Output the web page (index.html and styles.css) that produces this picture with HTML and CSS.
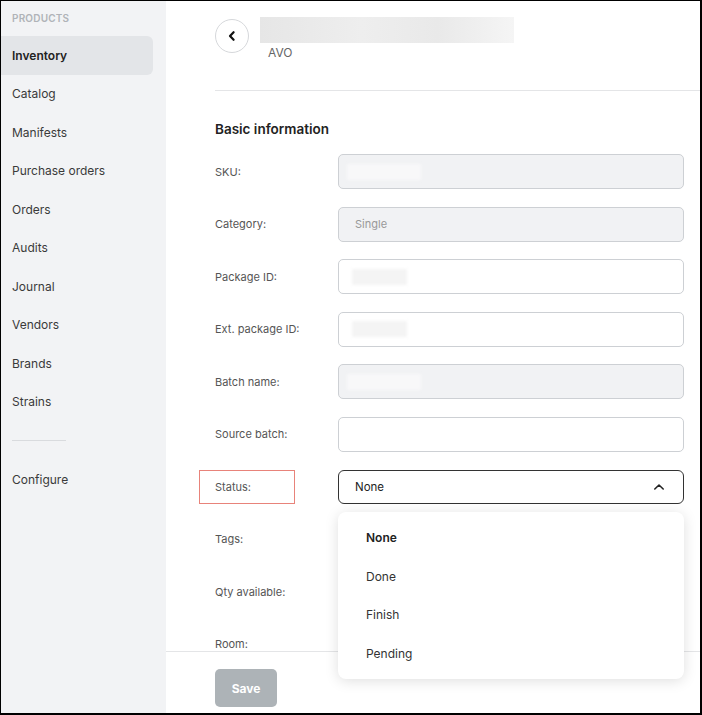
FILE: index.html
```html
<!DOCTYPE html>
<html lang="en">
<head>
  <meta charset="UTF-8" />
  <meta name="viewport" content="width=device-width, initial-scale=1.0" />
  <title>Inventory item</title>
  <link rel="stylesheet" href="styles.css">
</head>
<body>
  <div class="frame">
    <aside class="sidebar">
      <div class="nav-title">PRODUCTS</div>
      <nav>
        <div class="nav-item active">Inventory</div>
        <div class="nav-item">Catalog</div>
        <div class="nav-item">Manifests</div>
        <div class="nav-item">Purchase orders</div>
        <div class="nav-item">Orders</div>
        <div class="nav-item">Audits</div>
        <div class="nav-item">Journal</div>
        <div class="nav-item">Vendors</div>
        <div class="nav-item">Brands</div>
        <div class="nav-item">Strains</div>
      </nav>
      <div class="nav-divider"></div>
      <div class="nav-item">Configure</div>
    </aside>

    <main class="main">
      <div class="content">
        <header class="page-header">
          <button class="back-btn" aria-label="Back">
            <svg width="14" height="14" viewBox="0 0 14 14"><path d="M8.6 3.2 5 7l3.6 3.8" fill="none" stroke="#111" stroke-width="2.2" stroke-linecap="round" stroke-linejoin="round"/></svg>
          </button>
          <div class="title-block">
            <div class="title-blur"></div>
            <div class="subtitle">AVO</div>
          </div>
        </header>

        <section class="form">
          <h2>Basic information</h2>
          <div class="row">
            <label>SKU:</label>
            <div class="field disabled"><span class="blur blur-light"></span></div>
          </div>
          <div class="row">
            <label>Category:</label>
            <div class="field disabled">Single</div>
          </div>
          <div class="row">
            <label>Package ID:</label>
            <div class="field"><span class="blur"></span></div>
          </div>
          <div class="row">
            <label>Ext. package ID:</label>
            <div class="field"><span class="blur"></span></div>
          </div>
          <div class="row">
            <label>Batch name:</label>
            <div class="field disabled"><span class="blur blur-light"></span></div>
          </div>
          <div class="row">
            <label>Source batch:</label>
            <div class="field"></div>
          </div>
          <div class="row">
            <label class="highlight">Status:</label>
            <div class="select-wrap">
              <div class="field select">
                <span>None</span>
                <svg width="14" height="14" viewBox="0 0 14 14"><path d="M2.8 9 7 5l4.2 4" fill="none" stroke="#222" stroke-width="1.6" stroke-linecap="round" stroke-linejoin="round"/></svg>
              </div>
              <div class="dropdown">
                <div class="option selected">None</div>
                <div class="option">Done</div>
                <div class="option">Finish</div>
                <div class="option">Pending</div>
              </div>
            </div>
          </div>
          <div class="row">
            <label>Tags:</label>
            <div class="field"></div>
          </div>
          <div class="row">
            <label>Qty available:</label>
            <div class="field"></div>
          </div>
          <div class="row">
            <label>Room:</label>
            <div class="field"></div>
          </div>
        </section>
      </div>

      <footer class="footer">
        <button class="save-btn">Save</button>
      </footer>
    </main>
  </div>
</body>
</html>
```

FILE: styles.css
```css
* {
  box-sizing: border-box;
}
body {
  margin: 0;
  font-family: Inter, "Noto Sans", Arial, sans-serif;
  color: #333;
  background: #fff;
}
.frame {
  width: 702px;
  height: 715px;
  border: solid #000;
  border-width: 1px 2px 2px 1px;
  display: flex;
  overflow: hidden;
}

/* sidebar */
.sidebar {
  width: 165px;
  flex-shrink: 0;
  background: #f2f3f5;
  padding-top: 10px;
}
.nav-title {
  font-size: 10px;
  line-height: 14px;
  font-weight: 600;
  color: #b0b3b8;
  padding-left: 11px;
  margin-bottom: 11px;
  letter-spacing: 0.2px;
}
.nav-item {
  height: 38.5px;
  display: flex;
  align-items: center;
  padding-left: 11px;
  font-size: 12px;
  color: #3a3a3a;
  margin-right: 13px;
}
.nav-item.active {
  background: #e3e5e8;
  border-radius: 0 6px 6px 0;
  font-weight: 600;
  color: #222;
}
.nav-divider {
  width: 54px;
  height: 1px;
  background: #d9dbde;
  margin: 19px 0 19px 11px;
}

/* main */
.main {
  flex: 1;
  display: flex;
  flex-direction: column;
  min-width: 0;
  min-height: 0;
}
.content {
  flex: 1;
  min-height: 0;
  padding-left: 49px;
}
.page-header {
  height: 90px;
  padding-top: 16px;
  border-bottom: 1px solid #e4e5e7;
  display: flex;
  align-items: flex-start;
  gap: 11px;
}
.back-btn {
  width: 34px;
  height: 34px;
  margin-top: 2px;
  border-radius: 50%;
  border: 1px solid #d6d8db;
  background: #fff;
  display: flex;
  align-items: center;
  justify-content: center;
  padding: 0;
}
.title-blur {
  width: 254px;
  height: 26px;
  background: linear-gradient(to right, #e6e6e6, #eeeeee 40%, #e9e9e9 70%, #f5f5f5);
}
.subtitle {
  margin: 3px 0 0 8px;
  font-size: 12px;
  line-height: 14px;
  color: #666;
}

/* form */
.form {
  padding-right: 16px;
}
.form h2 {
  margin: 28px 0 15px;
  font-size: 13.5px;
  line-height: 20px;
  font-weight: 600;
  color: #222;
}
.row {
  display: flex;
  align-items: center;
  height: 35px;
  margin-bottom: 17.5px;
}
.row label {
  width: 123px;
  flex-shrink: 0;
  font-size: 11px;
  color: #555;
}
.row label.highlight {
  width: 96px;
  height: 34px;
  margin: 0 43px 0 -16px;
  padding-left: 15px;
  display: flex;
  align-items: center;
  border: 1px solid #e8837a;
}
.field {
  flex: 1;
  height: 35px;
  border: 1px solid #cdd0d4;
  border-radius: 5px;
  background: #fff;
  display: flex;
  align-items: center;
  padding: 0 16px;
  font-size: 11px;
  color: #999;
}
.field.disabled {
  background: #f1f2f4;
}
.blur {
  width: 55px;
  height: 16px;
  margin-left: -3px;
  background: #f4f4f4;
  filter: blur(1.5px);
}
.blur-light {
  width: 74px;
  margin-left: -8px;
  background: #f8f8f9;
}

/* status select */
.select-wrap {
  flex: 1;
  position: relative;
}
.field.select {
  height: 34px;
  border-color: #333;
  border-radius: 6px;
  justify-content: space-between;
  color: #222;
  font-size: 11.5px;
  padding-right: 17px;
}
.dropdown {
  position: absolute;
  top: 42px;
  left: 0;
  right: 0;
  background: #fff;
  border-radius: 8px;
  box-shadow: 0 2px 14px rgba(0, 0, 0, 0.13);
  padding: 7px 0 6px;
  z-index: 10;
}
.option {
  height: 38.5px;
  display: flex;
  align-items: center;
  padding-left: 28px;
  font-size: 12px;
  color: #333;
}
.option.selected {
  font-weight: 600;
  color: #222;
}

/* footer */
.footer {
  position: relative;
  z-index: 1;
  height: 62px;
  flex-shrink: 0;
  background: #fff;
  border-top: 1px solid #e4e5e7;
  padding: 17px 0 0 49px;
}
.save-btn {
  width: 62px;
  height: 38px;
  border: none;
  border-radius: 5px;
  background: #adb3b7;
  color: #fff;
  font-family: inherit;
  font-size: 12px;
  font-weight: 700;
}
```
